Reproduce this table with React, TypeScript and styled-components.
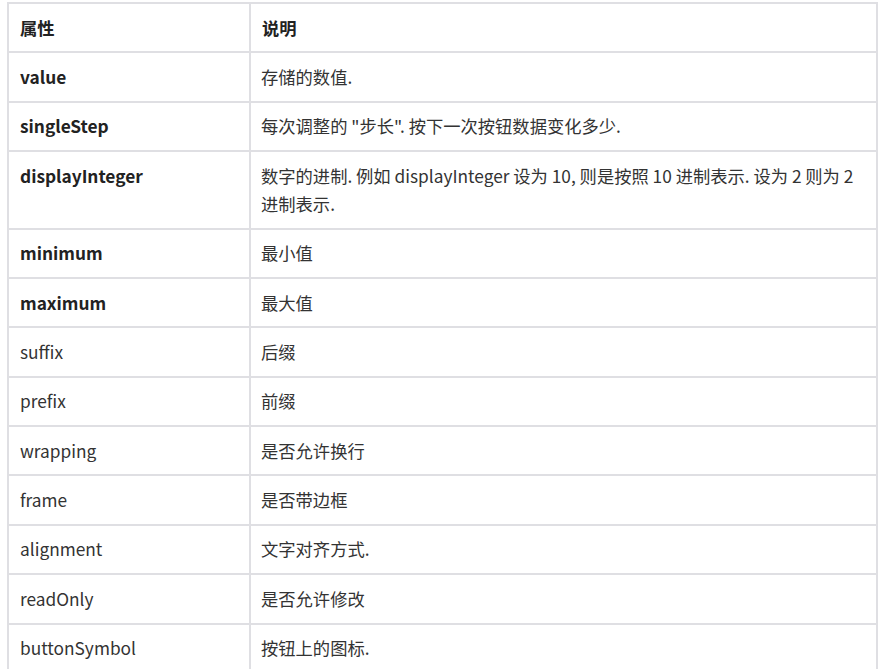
import React from 'react';
import styled, { createGlobalStyle } from 'styled-components';

const GlobalStyle = createGlobalStyle`
  body {
    margin: 0;
    background: #ffffff;
    font-family: "Noto Sans CJK SC", "Noto Sans", sans-serif;
    color: #333333;
  }
`;

const rows: { name: string; desc: string; strong?: boolean }[] = [
  { name: 'value', desc: '存储的数值.', strong: true },
  { name: 'singleStep', desc: '每次调整的 "步长". 按下一次按钮数据变化多少.', strong: true },
  {
    name: 'displayInteger',
    desc: '数字的进制. 例如 displayInteger 设为 10, 则是按照 10 进制表示. 设为 2 则为 2 进制表示.',
    strong: true,
  },
  { name: 'minimum', desc: '最小值', strong: true },
  { name: 'maximum', desc: '最大值', strong: true },
  { name: 'suffix', desc: '后缀' },
  { name: 'prefix', desc: '前缀' },
  { name: 'wrapping', desc: '是否允许换行' },
  { name: 'frame', desc: '是否带边框' },
  { name: 'alignment', desc: '文字对齐方式.' },
  { name: 'readOnly', desc: '是否允许修改' },
  { name: 'buttonSymbol', desc: '按钮上的图标.' },
];

export default function App() {
  return (
    <Page>
      <GlobalStyle />
      <PropTable>
        <thead>
          <tr>
            <HeadCell>属性</HeadCell>
            <HeadCell>说明</HeadCell>
          </tr>
        </thead>
        <tbody>
          {rows.map((row) => (
            <tr key={row.name}>
              <NameCell $strong={row.strong}>{row.name}</NameCell>
              <DescCell>{row.desc}</DescCell>
            </tr>
          ))}
        </tbody>
      </PropTable>
    </Page>
  );
}

const Page = styled.div`
  padding: 2px 6px 0 7px;
`;

const PropTable = styled.table`
  width: 871px;
  border-collapse: collapse;
  table-layout: fixed;
  font-size: 17.3px;
  line-height: 28px;

  th, td {
    border: 2px solid #dfdfe3;
    padding: 9.7px 11px;
    text-align: left;
    vertical-align: top;
  }

  th:first-child, td:first-child {
    width: 218px;
  }
`;

const HeadCell = styled.th`
  font-weight: 700;
  color: #222222;
`;

const NameCell = styled.td<{ $strong?: boolean }>`
  font-weight: ${(p) => (p.$strong ? 700 : 400)};
  color: ${(p) => (p.$strong ? '#222222' : '#333333')};
`;

const DescCell = styled.td`
  && {
    padding-left: 10px;
  }
  color: #333333;
`;
